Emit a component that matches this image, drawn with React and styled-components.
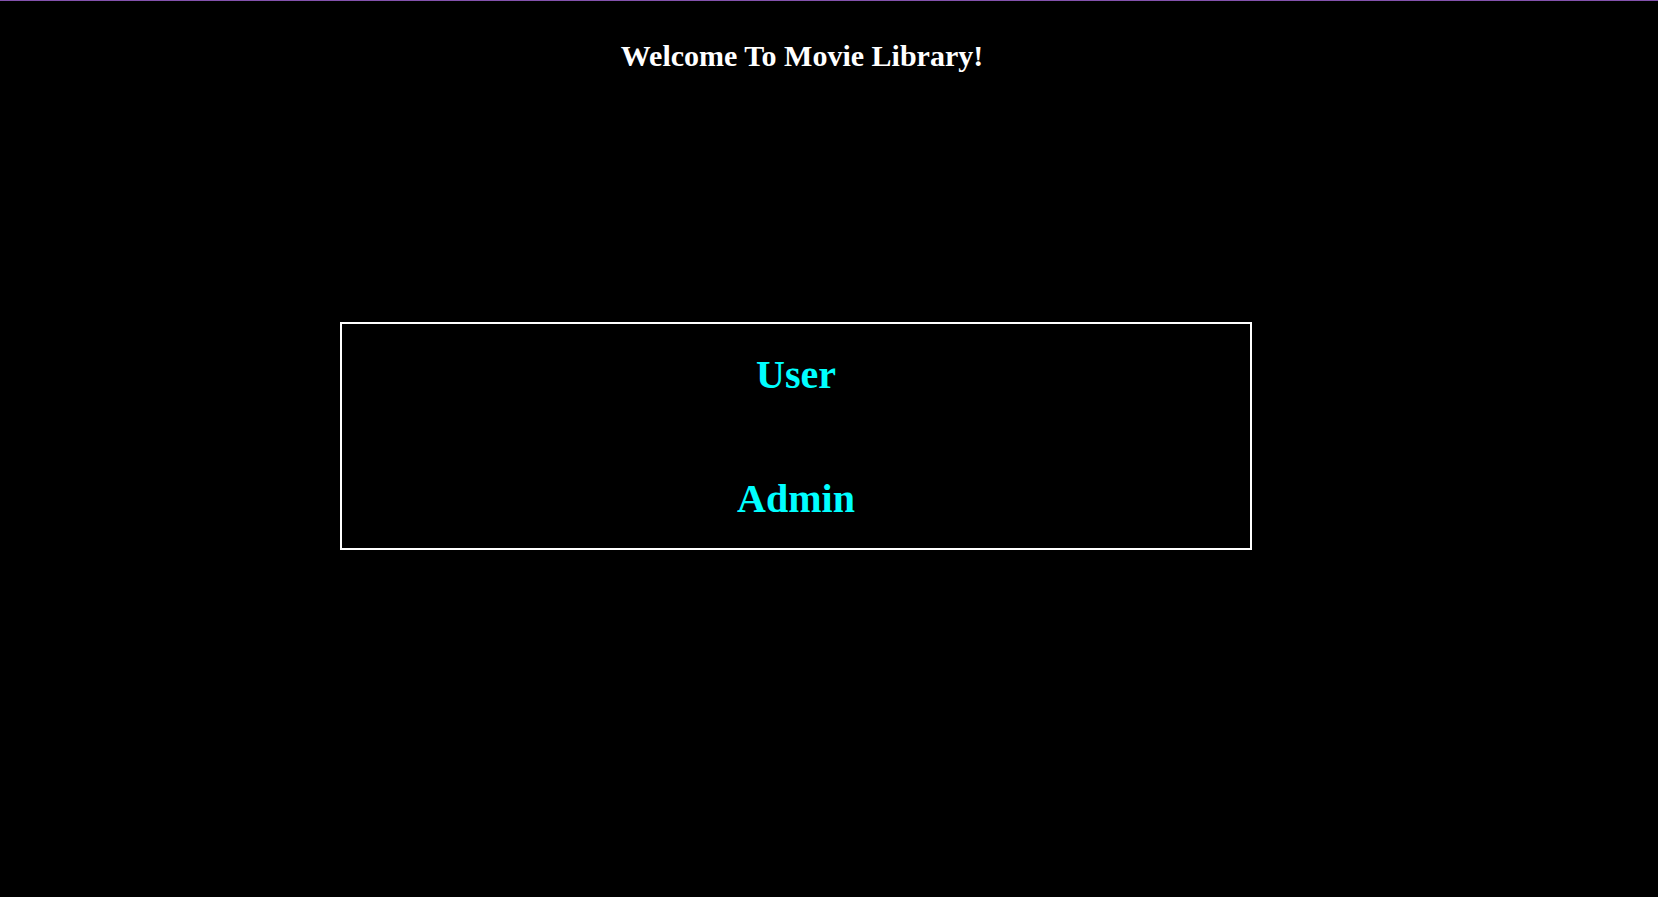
import React from "react";
import styled, { createGlobalStyle } from "styled-components";

const GlobalStyle = createGlobalStyle`
    body {
        margin: 0;
        background: #000;
        font-family: "Liberation Serif", "Times New Roman", serif;
    }
`;

function App() {
    return (
        <>
            <GlobalStyle />
            <Page>
                <Title>Welcome To Movie Library!</Title>
                <Choices>
                    <Choice href="#user">User</Choice>
                    <Choice href="#admin">Admin</Choice>
                </Choices>
            </Page>
        </>
    );
}

const Page = styled.div`
    min-height: 897px;
    box-sizing: border-box;
    border-top: 1px solid #8352ad;
    background: #000;
    overflow: hidden;
`;

const Title = styled.h1`
    margin: 38px 0 0;
    padding-right: 54px;
    text-align: center;
    color: #fff;
    font-size: 30px;
    font-weight: 700;
    line-height: normal;
`;

const Choices = styled.div`
    box-sizing: border-box;
    width: 912px;
    height: 228px;
    margin: 249px 0 0 340px;
    border: 2px solid #fff;
    padding: 27px 0 0;
    display: flex;
    flex-direction: column;
    align-items: center;
    gap: 77px;
`;

const Choice = styled.a`
    color: #00ffff;
    font-size: 40px;
    font-weight: 700;
    line-height: normal;
    text-decoration: none;
`;

export default App;
